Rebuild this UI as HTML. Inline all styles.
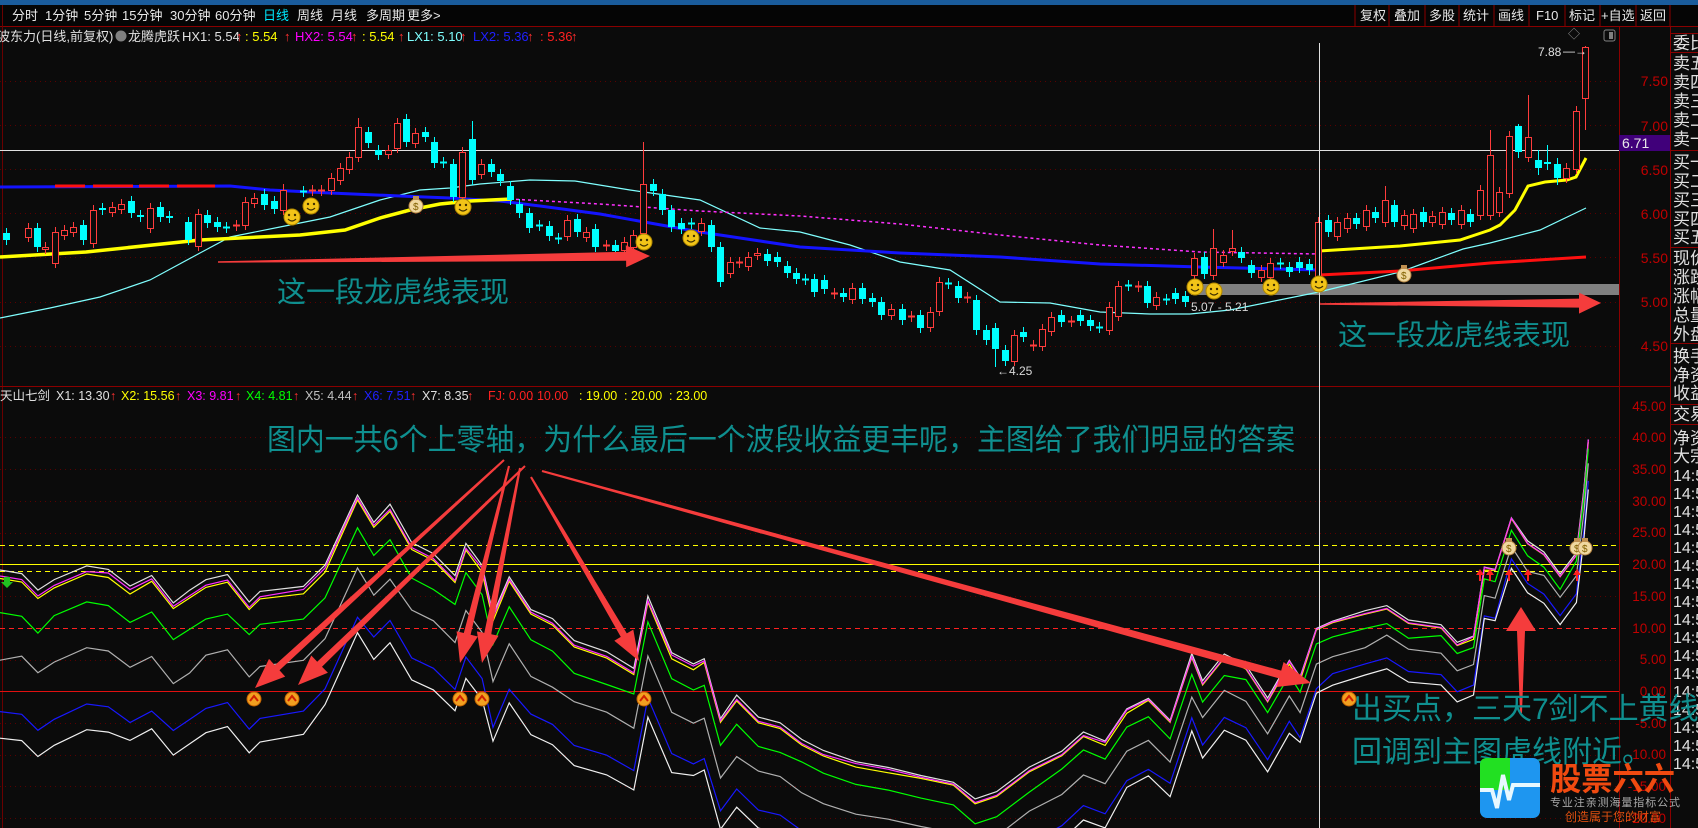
<!DOCTYPE html>
<html><head><meta charset="utf-8"><style>
html,body{margin:0;padding:0;background:#0b0b0b;width:1698px;height:828px;overflow:hidden}
svg{display:block;font-family:"Liberation Sans","Noto Sans CJK SC",sans-serif}
</style></head><body>
<svg id="s" width="1698" height="828" viewBox="0 0 1698 828" xmlns="http://www.w3.org/2000/svg">
<rect width="1698" height="828" fill="#0b0b0b"/>
<defs>
<clipPath id="cp"><rect x="0" y="46" width="1619" height="340"/></clipPath>
<clipPath id="cl"><rect x="0" y="404" width="1619" height="424"/></clipPath>
</defs>
<rect x="0" y="0" width="1698" height="5" fill="#1a5c9c"/>
<rect x="0" y="5" width="1698" height="21" fill="#050505"/>
<line x1="0" y1="26.5" x2="1698" y2="26.5" stroke="#8a0000"/>
<line x1="2.5" y1="5" x2="2.5" y2="828" stroke="#6a0000"/>
<g font-size="13" fill="#e8e8e8">
<text x="12" y="20">分时</text><text x="45" y="20">1分钟</text><text x="84" y="20">5分钟</text><text x="122" y="20">15分钟</text><text x="170" y="20">30分钟</text><text x="215" y="20">60分钟</text><text x="263" y="20" fill="#00e8ff">日线</text><text x="297" y="20">周线</text><text x="331" y="20">月线</text><text x="366" y="20">多周期</text><text x="407" y="20">更多&gt;</text>
<text x="1360" y="20">复权</text><text x="1394" y="20">叠加</text><text x="1429" y="20">多股</text><text x="1463" y="20">统计</text><text x="1498" y="20">画线</text><text x="1536" y="20">F10</text><text x="1569" y="20">标记</text><text x="1601" y="20">+自选</text><text x="1640" y="20">返回</text>
</g>
<g stroke="#8a0000"><line x1="1355" y1="5" x2="1355" y2="26"/><line x1="1389" y1="5" x2="1389" y2="26"/><line x1="1425" y1="5" x2="1425" y2="26"/><line x1="1459" y1="5" x2="1459" y2="26"/><line x1="1494" y1="5" x2="1494" y2="26"/><line x1="1529" y1="5" x2="1529" y2="26"/><line x1="1565" y1="5" x2="1565" y2="26"/><line x1="1600" y1="5" x2="1600" y2="26"/><line x1="1636" y1="5" x2="1636" y2="26"/><line x1="1670" y1="5" x2="1670" y2="26"/></g>

<g font-size="13">
<text x="-3" y="41" fill="#e0e0e0">波东力(日线,前复权)</text>
<circle cx="121" cy="36" r="5.5" fill="#808080"/>
<text x="128" y="41" fill="#e0e0e0">龙腾虎跃</text>
<text x="182" y="41" fill="#e0e0e0">HX1: 5.54</text><text x="236" y="41" fill="#ff3030">↑</text>
<text x="245" y="41" fill="#ffff00">: 5.54</text><text x="284" y="41" fill="#ff3030">↑</text>
<text x="295" y="41" fill="#ff00ff">HX2: 5.54</text><text x="351" y="41" fill="#ff3030">↑</text>
<text x="362" y="41" fill="#ffff00">: 5.54</text><text x="398" y="41" fill="#ff3030">↑</text>
<text x="407" y="41" fill="#80ffff">LX1: 5.10</text><text x="460" y="41" fill="#ff3030">↑</text>
<text x="473" y="41" fill="#2020ff">LX2: 5.36</text><text x="527" y="41" fill="#ff3030">↑</text>
<text x="540" y="41" fill="#ff2020">: 5.36</text><text x="571" y="41" fill="#ff3030">↑</text>
</g>
<line x1="1619.5" y1="27" x2="1619.5" y2="828" stroke="#8a0000"/>
<line x1="1670.5" y1="27" x2="1670.5" y2="828" stroke="#8a0000"/>
<line x1="0" y1="386.5" x2="1670" y2="386.5" stroke="#8a0000"/>
<rect x="1619" y="135" width="51" height="16" fill="#40007a"/>
<text x="1622" y="148" font-size="14" fill="#e8e8e8">6.71</text>
<g font-size="14" fill="#c00000" text-anchor="end">
<text x="1668" y="86">7.50</text><text x="1668" y="131">7.00</text><text x="1668" y="175">6.50</text><text x="1668" y="219">6.00</text><text x="1668" y="263">5.50</text><text x="1668" y="307">5.00</text><text x="1668" y="351">4.50</text>
</g>
<g font-size="13.5" fill="#c00000" text-anchor="end">
<text x="1666" y="411">45.00</text><text x="1666" y="442">40.00</text><text x="1666" y="474">35.00</text><text x="1666" y="506">30.00</text><text x="1666" y="537">25.00</text><text x="1666" y="569">20.00</text><text x="1666" y="601">15.00</text><text x="1666" y="633">10.00</text><text x="1666" y="664">5.00</text><text x="1666" y="696">0.00</text><text x="1666" y="728">-5.00</text><text x="1666" y="759">-10.00</text><text x="1666" y="791">-15.00</text><text x="1666" y="823">-20.00</text>
</g>
<g font-size="17" fill="#e0e0e0">
<text x="1673" y="49">委比</text><text x="1673" y="69">卖五</text><text x="1673" y="88">卖四</text><text x="1673" y="107">卖三</text><text x="1673" y="126">卖二</text><text x="1673" y="145">卖一</text>
<text x="1673" y="168">买一</text><text x="1673" y="187">买二</text><text x="1673" y="206">买三</text><text x="1673" y="225">买四</text><text x="1673" y="243">买五</text>
<text x="1673" y="264">现价</text><text x="1673" y="283">涨跌</text><text x="1673" y="302">涨幅</text><text x="1673" y="321">总量</text><text x="1673" y="340">外盘</text>
<text x="1673" y="362">换手</text><text x="1673" y="381">净资</text><text x="1673" y="399">收益</text>
<text x="1673" y="420">交易</text><text x="1673" y="444">净资</text><text x="1673" y="462">大宗</text>
</g>
<g font-size="16" fill="#e0e0e0">
<text x="1673" y="481">14:5</text><text x="1673" y="499">14:5</text><text x="1673" y="517">14:5</text><text x="1673" y="535">14:5</text><text x="1673" y="553">14:5</text><text x="1673" y="571">14:5</text><text x="1673" y="589">14:5</text><text x="1673" y="607">14:5</text><text x="1673" y="625">14:5</text><text x="1673" y="643">14:5</text><text x="1673" y="661">14:5</text><text x="1673" y="679">14:5</text><text x="1673" y="697">14:5</text><text x="1673" y="715">14:5</text><text x="1673" y="733">14:5</text><text x="1673" y="751">14:5</text><text x="1673" y="769">14:5</text>
</g>
<g stroke="#8a0000"><line x1="1670" y1="33.5" x2="1698" y2="33.5"/><line x1="1670" y1="52.5" x2="1698" y2="52.5"/><line x1="1670" y1="150.5" x2="1698" y2="150.5"/><line x1="1670" y1="247.5" x2="1698" y2="247.5"/><line x1="1670" y1="343.5" x2="1698" y2="343.5"/><line x1="1670" y1="404.5" x2="1698" y2="404.5"/><line x1="1670" y1="424.5" x2="1698" y2="424.5"/></g>

<g font-size="12.5">
<text x="0" y="400" fill="#e0e0e0">天山七剑</text>
<text x="56" y="400" fill="#e0e0e0">X1: 13.30</text><text x="110" y="400" fill="#ff3030">↑</text>
<text x="121" y="400" fill="#ffff00">X2: 15.56</text><text x="175" y="400" fill="#ff3030">↑</text>
<text x="187" y="400" fill="#ff00ff">X3: 9.81</text><text x="235" y="400" fill="#ff3030">↑</text>
<text x="246" y="400" fill="#00ff00">X4: 4.81</text><text x="293" y="400" fill="#ff3030">↑</text>
<text x="305" y="400" fill="#c0c0c0">X5: 4.44</text><text x="352" y="400" fill="#ff3030">↑</text>
<text x="364" y="400" fill="#2020ff">X6: 7.51</text><text x="410" y="400" fill="#ff3030">↑</text>
<text x="422" y="400" fill="#e0e0e0">X7: 8.35</text><text x="467" y="400" fill="#ff3030">↑</text>
<text x="488" y="400" fill="#ff2020">FJ: 0.00</text><text x="530" y="400" fill="#ff2020">: 10.00</text><text x="579" y="400" fill="#ffff00">: 19.00</text><text x="624" y="400" fill="#ffff00">: 20.00</text><text x="669" y="400" fill="#ffff00">: 23.00</text>
</g>

<g id="price" clip-path="url(#cp)"></g>
<g id="lower" clip-path="url(#cl)"></g>

<text x="1538" y="56" font-size="12" fill="#e0e0e0">7.88</text>
<text x="1563" y="55" font-size="12" fill="#e0e0e0">—→</text>
<text x="1568" y="38" font-size="12" fill="#909090">◇</text>
<rect x="1604" y="30" width="11" height="11" rx="2" fill="none" stroke="#808080"/><rect x="1609" y="32" width="4" height="7" fill="#808080"/>
<text x="1191" y="311" font-size="12" fill="#d8d8d8">5.07 - 5.21</text>
<text x="997" y="375" font-size="12" fill="#d8d8d8">←4.25</text>

<g id="over"></g>

<g font-size="29" fill="#0f8f8f">
<text x="277" y="302">这一段龙虎线表现</text>
<text x="1338" y="345">这一段龙虎线表现</text>
</g>
<text x="267" y="450" font-size="30" fill="#0f8f8f" textLength="1028" lengthAdjust="spacingAndGlyphs">图内一共6个上零轴，为什么最后一个波段收益更丰呢，主图给了我们明显的答案</text>
<g font-size="30" fill="#0f8f8f">
<text x="1352" y="719">出买点，三天7剑不上黄线，</text>
<text x="1352" y="762">回调到主图虎线附近。</text>
</g>
<rect x="1480" y="758" width="60" height="60" rx="7" fill="#1e96f0"/>
<path d="M1487 758 H1510 V790 H1480 V765 Q1480 758 1487 758Z" fill="#22e022"/>
<polyline points="1480,790 1492,790 1497,808 1503,775 1509,800 1513,785 1540,785" fill="none" stroke="#e8f8ff" stroke-width="4"/>
<text x="1550" y="790" font-size="32" font-weight="bold" fill="#f04a10" textLength="125" lengthAdjust="spacingAndGlyphs">股票六六</text>
<text x="1550" y="806" font-size="11" fill="#a8a8a8" textLength="130">专业注亲测海量指标公式</text>
<text x="1565" y="821" font-size="12" fill="#e05010">创造属于您的财富</text>
</svg>
<script>
var NS="http://www.w3.org/2000/svg";
function el(p,t,a){var e=document.createElementNS(NS,t);for(var k in a)e.setAttribute(k,a[k]);p.appendChild(e);return e;}
var P=document.getElementById('price'),L=document.getElementById('lower'),O=document.getElementById('over');
[81,125,169,213,257,302,346].forEach(function(y){el(P,'line',{x1:0,y1:y+.5,x2:1619,y2:y+.5,stroke:'#5a0000','stroke-dasharray':'1 4'});});
el(P,'line',{x1:0,y1:150.5,x2:1619,y2:150.5,stroke:'#e0e0e0'});
el(P,'rect',{x:1191,y:284,width:428,height:11,fill:'#808080'});
function pl(g,pts,c,w,extra){var a={points:pts.map(function(p){return p[0]+','+p[1]}).join(' '),fill:'none',stroke:c,'stroke-width':w};for(var k in extra)a[k]=extra[k];return el(g,'polyline',a);}
pl(P,[[0,318],[50,308],[100,297],[150,280],[200,253],[230,237],[280,227],[330,217],[380,200],[420,190],[450,188],[480,184],[530,180],[575,181],[630,190],[700,200],[760,228],[800,232],[850,245],[900,262],[950,270],[1000,302],[1050,303],[1100,312],[1150,314],[1190,314],[1230,310],[1319,292],[1400,272],[1463,249],[1490,243],[1540,230],[1586,208]],'#80ffff',1.2);
pl(P,[[0,187],[230,186],[270,190],[330,193],[400,196],[450,198],[500,201],[540,206],[600,214],[700,232],[800,247],[900,253],[1000,257],[1100,264],[1200,267],[1319,270]],'#1414ff',3);
pl(P,[[55,186],[215,186]],'#ff1010',3,{'stroke-dasharray':'30 8 40 6'});
pl(P,[[1319,275],[1400,271],[1490,263],[1586,257]],'#ff1010',3);
pl(P,[[510,199],[600,204],[700,211],[800,216],[900,224],[1000,235],[1100,245],[1200,252],[1319,254]],'#ff30ff',1.5,{'stroke-dasharray':'3 3'});
pl(P,[[0,257],[86,252],[200,240],[300,235],[345,230],[380,218],[410,210],[440,204],[470,201],[512,199]],'#ffff00',3.5);
pl(P,[[1319,251],[1400,246],[1460,240],[1490,230],[1500,225],[1515,210],[1528,186],[1545,182],[1567,180],[1576,177],[1586,158]],'#ffff00',3);
var C=[[6,'c',233,240],[28,'r',228,237],[37,'c',228,247],[45,'r',247,249],[55,'r',232,263],[64,'r',230,235],[73,'r',227,232],[83,'c',225,240],[93,'r',210,243],[102,'c',208,210],[112,'r',207,212],[121,'r',204,209],[131,'c',201,213],[140,'c',215,217],[150,'r',208,228],[160,'c',207,217],[169,'c',216,218],[188,'c',222,240],[198,'r',214,246],[207,'c',215,223],[217,'c',222,227],[226,'c',227,228],[236,'r',225,226],[245,'r',202,225],[254,'r',198,203],[264,'c',194,205],[274,'c',201,209],[283,'r',190,210,184],[303,'c',191,192],[312,'r',190,191],[321,'r',190,191],[331,'r',178,190],[340,'r',168,180],[349,'r',157,169],[358,'r',127,157,118],[368,'c',132,143],[378,'c',150,155],[388,'r',150,154],[397,'r',123,148],[406,'c',119,142],[415,'r',133,143],[425,'c',132,137],[434,'c',142,163],[443,'c',162,163],[453,'c',164,197],[462,'r',152,197],[472,'c',139,180,121],[481,'r',164,174],[491,'c',164,172],[500,'c',174,181],[510,'c',186,200],[519,'c',204,213],[529,'c',213,228],[539,'c',225,226],[549,'c',226,236],[558,'c',238,239],[567,'r',220,236],[577,'c',219,232],[586,'r',232,237],[595,'c',229,247],
[606,'r',245,246],[615,'c',245,251],[624,'r',242,250],[633,'r',235,247],[643,'r',184,233,142],[653,'c',184,191],[662,'c',194,210],[671,'c',210,227],[681,'c',223,229],[691,'c',223,224],[701,'r',223,231],[711,'c',225,247],[720,'c',247,282],[730,'r',262,273],[739,'r',262,263],[748,'r',257,266],[757,'r',253,255],[767,'c',254,261],[777,'c',257,262],[787,'c',266,273],[796,'c',273,279],[805,'c',279,280],[814,'c',279,292],[824,'c',280,289],[834,'r',293,294],[843,'c',293,297],[852,'r',288,299],[862,'c',288,299],[872,'c',298,302],[881,'c',302,315],[891,'r',309,315],[902,'c',309,320],[911,'r',316,317],[920,'c',315,328],[930,'r',312,327],[939,'r',282,311],[948,'c',283,284],[958,'c',286,298],[967,'r',297,298],[976,'c',300,330],[986,'c',330,340],[995,'c',328,349,null,367],[1005,'c',350,361],[1014,'r',335,361],[1023,'c',332,337],[1033,'r',345,346],[1042,'r',329,346],[1051,'r',317,331],[1061,'c',315,322],[1071,'r',321,322],[1080,'c',315,321],[1090,'c',320,326],[1099,'c',327,328],[1109,'r',307,330],[1118,'r',286,316],[1128,'c',285,286],[1138,'r',286,287],[1147,'c',286,303],[1156,'r',297,305],[1166,'c',299,300],[1175,'c',293,299],[1185,'c',296,302],[1194,'r',258,275],[1204,'c',257,274],[1213,'r',248,275,229],[1223,'r',255,262],[1232,'r',248,251,230],[1241,'c',252,258],[1251,'c',265,273],[1261,'r',270,277],[1270,'r',263,277],[1280,'c',263,264],[1289,'c',267,272],
[1299,'c',262,268],[1309,'c',264,270],[1318,'r',222,282],[1328,'c',220,232],[1337,'r',222,236],[1347,'r',218,228],[1356,'c',218,224],[1366,'r',210,226],[1375,'c',212,218],[1385,'r',200,222,186],[1394,'c',205,222],[1404,'r',215,225],[1413,'r',214,228],[1423,'c',212,222],[1432,'r',216,222],[1442,'r',212,224],[1451,'c',213,220],[1461,'r',210,224],[1470,'c',214,222],[1480,'r',190,215],[1490,'r',155,215,130],[1499,'r',192,212],[1509,'r',136,193],[1518,'c',126,152,124,158],[1528,'r',137,157,95],[1538,'c',160,168,150,175],[1547,'c',162,164,145,170],[1557,'c',164,178,158,185],[1566,'r',168,178],[1576,'r',111,169],[1585,'r',47,98,null,130]];
C.forEach(function(c){var x=c[0],t=c[2],b=c[3],h=c[4]||t-5,l=c[5]||b+5,col=c[1]=='r'?'#ff3c3c':'#00ffff';
el(P,'line',{x1:x+.5,y1:h,x2:x+.5,y2:l,stroke:col});
if(b-t<2){el(P,'line',{x1:x-3,y1:t+.5,x2:x+4,y2:t+.5,stroke:col,'stroke-width':2});}
else if(c[1]=='r'){el(P,'rect',{x:x-2.5,y:t+.5,width:6,height:b-t,fill:'#0b0b0b',stroke:col});}
else el(P,'rect',{x:x-3,y:t,width:7,height:b-t,fill:col});});
el(O,'line',{x1:1319.5,y1:43,x2:1319.5,y2:828,stroke:'#e0e0e0'});
function smile(x,y){var g=el(O,'g',{});el(g,'circle',{cx:x,cy:y,r:8,fill:'#f2c418',stroke:'#b08800'});el(g,'circle',{cx:x-3,cy:y-2,r:1.2,fill:'#403000'});el(g,'circle',{cx:x+3,cy:y-2,r:1.2,fill:'#403000'});el(g,'path',{d:'M'+(x-4)+' '+(y+2)+' Q'+x+' '+(y+6)+' '+(x+4)+' '+(y+2),fill:'none',stroke:'#403000','stroke-width':1.2});}
function bag(x,y){el(O,'circle',{cx:x,cy:y+1,r:7,fill:'#f0d8a0',stroke:'#b08040'});el(O,'rect',{x:x-3,y:y-9,width:6,height:4,fill:'#c09050'});var t=el(O,'text',{x:x-3,y:y+5,'font-size':10,fill:'#806000'});t.textContent='$';}
[[292,217],[311,206],[463,207],[644,242],[691,238],[1195,287],[1214,291],[1271,287],[1319,284]].forEach(function(p){smile(p[0],p[1]);});
bag(416,205);bag(1404,274);
[437,469,501,533,596,660,723,755,786,818].forEach(function(y){el(L,'line',{x1:0,y1:y+.5,x2:1619,y2:y+.5,stroke:'#5a0000','stroke-dasharray':'1 4'});});
el(L,'line',{x1:0,y1:545.5,x2:1619,y2:545.5,stroke:'#ffff00','stroke-dasharray':'5 4'});
el(L,'line',{x1:0,y1:564.5,x2:1619,y2:564.5,stroke:'#ffff00'});
el(L,'line',{x1:0,y1:571.5,x2:1619,y2:571.5,stroke:'#ffff00','stroke-dasharray':'5 4'});
el(L,'line',{x1:0,y1:628.5,x2:1619,y2:628.5,stroke:'#ff2020','stroke-dasharray':'5 4'});
el(L,'line',{x1:0,y1:691.5,x2:1619,y2:691.5,stroke:'#e01010'});
var prof=[[0,527],[20,530],[35,545],[50,535],[80,522],[100,525],[120,540],[140,530],[160,555],[175,545],[190,535],[210,530],[230,555],[240,545],[280,540],[300,520],[330,455],[345,480],[360,465],[380,500],[400,510],[420,530],[430,500],[445,520],[455,565],[470,530],[490,560],[510,570],[530,590],[560,600],[585,615],[598,548],[620,600],[640,610],[650,605],[665,660],[680,640],[700,660],[720,665],[740,680],[760,690],[790,700],[820,705],[850,712],[880,718],[900,735],[920,728],[950,705],[980,690],[1000,672],[1020,680],[1040,650],[1060,640],[1080,660],[1100,600],[1110,625],[1130,600],[1150,610],[1170,640],[1190,605],[1200,620],[1215,575],[1230,568],[1260,560],[1280,555],[1300,568],[1330,572],[1345,588],[1360,582],[1370,518],[1380,520],[1395,472],[1410,495],[1425,505],[1440,525],[1455,505],[1462,445],[1466,400]].map(function(p){return [p[0]/0.923,p[1]/0.923+8];});
var lines=[['#e0e0e0',-8],['#ffff00',0],['#ff30ff',-3],['#00ff00',32],['#b0b0b0',78],['#1818ff',135],['#f0f0f0',160]];
lines.forEach(function(ln,i){var pts=prof.map(function(p,j){var f=1-0.72*Math.min(1,p[0]/1590);var n=((j*37+i*11)%9-4)*0.8*(i>2?1:0.3);return [p[0].toFixed(1),(p[1]+ln[1]*f+n).toFixed(1)];});pl(L,pts,ln[0],1.2);});
function upm(x,y){el(O,'circle',{cx:x,cy:y,r:7,fill:'#f2a020',stroke:'#c06000'});el(O,'path',{d:'M'+(x-4)+' '+(y+2)+' L'+x+' '+(y-3)+' L'+(x+4)+' '+(y+2),fill:'none',stroke:'#d02000','stroke-width':2});}
[[254,699],[292,699],[460,699],[482,699],[644,699],[1349,699]].forEach(function(p){upm(p[0],p[1]);});
[1480,1490,1509,1528,1577].forEach(function(x){el(O,'path',{d:'M'+x+' 569 l-4 6 h3 v6 h2 v-6 h3z',fill:'#ff2020'});});
bag(1509,547);bag(1577,547);bag(1585,547);
el(O,'path',{d:'M4 577 h6 v5 h3 l-6 6 l-6 -6 h3z',fill:'#20c020'});
function arrow(x1,y1,x2,y2,w0,w1,hl,hw,col){var dx=x2-x1,dy=y2-y1,len=Math.sqrt(dx*dx+dy*dy),ux=dx/len,uy=dy/len,nx=-uy,ny=ux;var bx=x2-ux*hl,by=y2-uy*hl;
var p=[[x1+nx*w0/2,y1+ny*w0/2],[bx+nx*w1/2,by+ny*w1/2],[bx+nx*hw/2,by+ny*hw/2],[x2,y2],[bx-nx*hw/2,by-ny*hw/2],[bx-nx*w1/2,by-ny*w1/2],[x1-nx*w0/2,y1-ny*w0/2]];
el(O,'polygon',{points:p.map(function(q){return q[0].toFixed(1)+','+q[1].toFixed(1)}).join(' '),fill:col||'#f53c3c'});}
arrow(218,262,650,256,1.5,9,24,22);
arrow(1320,304,1601,303,1.5,9,22,21);
arrow(504,460,255,688,2,7,30,24);
arrow(525,466,298,685,2,7,30,24);
arrow(509,466,460,663,2,7,30,22);
arrow(520,468,482,663,2,7,30,22);
arrow(531,477,639,661,2,7,30,22);
arrow(542,471,1311,683,2,8,32,26);
arrow(1521,713,1521,607,2,8,24,30);
</script>
</body></html>
